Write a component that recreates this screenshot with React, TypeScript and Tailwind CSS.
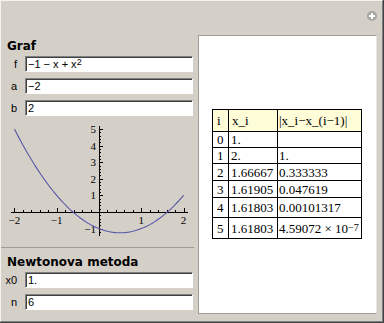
import React from "react";

const ui = { fontFamily: '"DejaVu Sans", Verdana, sans-serif' };
const field = { fontFamily: '"Liberation Sans", Arial, sans-serif' };
const serif = { fontFamily: '"Liberation Serif", "Times New Roman", serif' };

// page coordinates for the plot
const X0 = 98;
const Y0 = 210;
const SX = 42.3;
const SY = 16.6;
const px = (x: number) => X0 + SX * x;
const py = (y: number) => Y0 - SY * y;

function Field({ label, children }: { label: string; children: React.ReactNode }) {
  return (
    <div className="flex items-center h-[16px]">
      <div className="w-[20px] pr-[8px] text-right text-[11px] text-black leading-none" style={field}>
        {label}
      </div>
      <div
        className="w-[168px] h-[16px] bg-white border border-t-[#808080] border-l-[#808080] border-r-white border-b-white shadow-[inset_1px_1px_0_#404040] pl-[2px] flex items-center text-[11px] text-black leading-none"
        style={field}
      >
        {children}
      </div>
    </div>
  );
}

function Plot() {
  const pts: string[] = [];
  for (let i = 0; i <= 80; i++) {
    const x = -2 + (4 * i) / 80;
    pts.push(`${px(x).toFixed(2)},${py(x * x - x - 1).toFixed(2)}`);
  }
  const xMinor: number[] = [];
  for (let v = -2; v <= 2.001; v += 0.2) if (Math.abs(v) > 0.01) xMinor.push(v);
  const yMinor: number[] = [];
  for (let v = -1.2; v <= 5.001; v += 0.2) if (Math.abs(v) > 0.01) yMinor.push(v);
  const isMajor = (v: number) => Math.abs(v - Math.round(v)) < 0.01;

  return (
    <svg width={196} height={126} viewBox="0 115 196 126" className="block">
      <line x1={10} y1={Y0 + 0.5} x2={187} y2={Y0 + 0.5} stroke="#000" strokeWidth={1} />
      <line x1={X0 + 0.5} y1={124} x2={X0 + 0.5} y2={234} stroke="#000" strokeWidth={1} />
      {xMinor.map((v, i) => (
        <line
          key={"x" + i}
          x1={Math.round(px(v)) + 0.5}
          x2={Math.round(px(v)) + 0.5}
          y1={Y0}
          y2={Y0 - (isMajor(v) ? 4 : 2)}
          stroke="#000"
          strokeWidth={1}
        />
      ))}
      {yMinor.map((v, i) => (
        <line
          key={"y" + i}
          x1={X0}
          x2={X0 + (isMajor(v) ? 4 : 2)}
          y1={Math.round(py(v)) + 0.5}
          y2={Math.round(py(v)) + 0.5}
          stroke="#000"
          strokeWidth={1}
        />
      ))}
      {[-2, -1, 1, 2].map((v) => (
        <text key={v} x={px(v)} y={Y0 + 12} fontSize={11} textAnchor="middle" style={serif} fill="#000">
          {v < 0 ? "\u2212" + -v : v}
        </text>
      ))}
      {[-1, 1, 2, 3, 4, 5].map((v) => (
        <text key={v} x={X0 - 3} y={py(v) + 4} fontSize={11} textAnchor="end" style={serif} fill="#000">
          {v < 0 ? "\u2212" + -v : v}
        </text>
      ))}
      <polyline points={pts.join(" ")} fill="none" stroke="#5858a8" strokeWidth={1.1} />
    </svg>
  );
}

const rows: { c: [string, string, React.ReactNode]; h: string }[] = [
  { c: ["0", "1.", ""], h: "h-[16px]" },
  { c: ["1", "2.", "1."], h: "h-[16px]" },
  { c: ["2", "1.66667", "0.333333"], h: "h-[17px]" },
  { c: ["3", "1.61905", "0.047619"], h: "h-[17px]" },
  { c: ["4", "1.61803", "0.00101317"], h: "h-[20px]" },
  {
    c: [
      "5",
      "1.61803",
      <span>
        4.59072 × 10<sup className="text-[10px] relative -top-[2px]">−7</sup>
      </span>,
    ],
    h: "h-[21px]",
  },
];

function Cell({ h, pl, children, head }: { h: string; pl: string; children: React.ReactNode; head?: boolean }) {
  return (
    <div
      className={`${h} ${pl} ${head ? "bg-[#fffcd8]" : ""} border-r border-b border-black flex items-center whitespace-nowrap overflow-hidden`}
    >
      {children}
    </div>
  );
}

export default function App() {
  return (
    <div className="w-[384px] h-[323px] bg-[#404040] pr-[1px] pb-[1px]">
      <div className="relative w-full h-full bg-[#d4d0c8] border-t border-l border-t-[#f4f3ef] border-l-[#f4f3ef] border-r border-b border-r-[#808080] border-b-[#808080] flex">
        {/* plus button */}
        <div className="absolute left-[366px] top-[10px] w-[10px] h-[10px] rounded-full bg-[#a8a6a0] flex items-center justify-center">
          <div className="relative w-[6px] h-[6px]">
            <div className="absolute left-[2px] top-0 w-[2px] h-[6px] bg-white" />
            <div className="absolute left-0 top-[2px] w-[6px] h-[2px] bg-white" />
          </div>
        </div>

        {/* left column */}
        <div className="w-[196px] flex flex-col pt-[36px]">
          <div className="pl-[6px] text-[12px] font-bold text-black leading-[18px]" style={ui}>
            Graf
          </div>
          <div className="flex flex-col gap-[6px] mt-[1px] pl-[4px]">
            <Field label="f">
              <span>
                −1 − x + x<sup className="text-[9px] relative -top-[3px]">2</sup>
              </span>
            </Field>
            <Field label="a">−2</Field>
            <Field label="b">2</Field>
          </div>
          <div className="mt-[1px]">
            <Plot />
          </div>
          <div className="mt-[4px] ml-0 w-[193px] h-[1px] bg-[#a09d96]" />
          <div className="mt-[6px] pl-[6px] text-[12px] font-bold text-black leading-[16px]" style={ui}>
            Newtonova metoda
          </div>
          <div className="flex flex-col gap-[6px] mt-[2px] pl-[4px]">
            <Field label="x0">1.</Field>
            <Field label="n">6</Field>
          </div>
        </div>

        {/* output panel */}
        <div className="mt-[34px] ml-[1px] w-[179px] h-[279px] bg-white border border-t-[#a09d96] border-l-[#a09d96] border-r-[#e8e6e0] border-b-[#a09d96] pl-[13px] pt-[73px]">
          <div
            className="grid grid-cols-[16px_49px_84px] w-[150px] border-t border-l border-black text-[13px] text-black leading-none"
            style={serif}
          >
            <Cell h="h-[22px]" pl="pl-[4px]" head>
              i
            </Cell>
            <Cell h="h-[22px]" pl="pl-[3px]" head>
              x_i
            </Cell>
            <Cell h="h-[22px]" pl="pl-[1px]" head>
              |x_i−x_(i−1)|
            </Cell>
            {rows.map((r, i) => (
              <React.Fragment key={i}>
                <Cell h={r.h} pl="pl-[4px]">
                  {r.c[0]}
                </Cell>
                <Cell h={r.h} pl="pl-[2px]">
                  {r.c[1]}
                </Cell>
                <Cell h={r.h} pl="pl-[1px]">
                  {r.c[2]}
                </Cell>
              </React.Fragment>
            ))}
          </div>
        </div>
      </div>
    </div>
  );
}
